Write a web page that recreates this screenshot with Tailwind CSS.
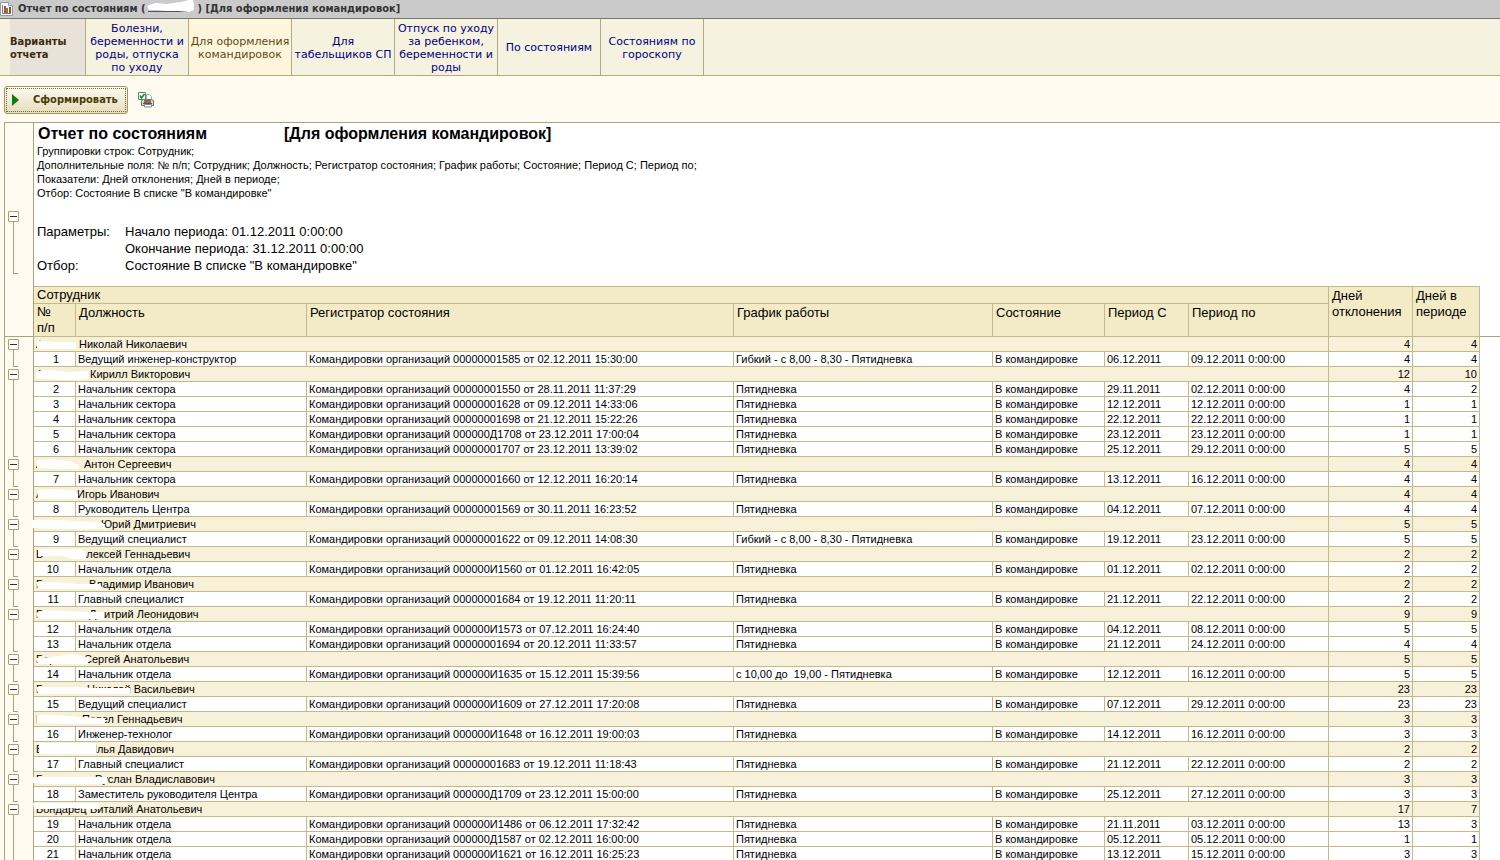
<!DOCTYPE html>
<html lang="ru">
<head>
<meta charset="utf-8">
<title>Отчет по состояниям</title>
<script src="https://cdn.jsdelivr.net/npm/@tailwindcss/browser@4"></script>
</head>
<body class="flex h-screen flex-col overflow-hidden bg-[#fffbf0] font-['Liberation_Sans',Arial,sans-serif] text-black">

<header class="flex h-[19px] shrink-0 items-center gap-[5px] border-b border-[#77766f] bg-[#cacaca] font-['DejaVu_Sans_Condensed','DejaVu_Sans',sans-serif] text-[11px] font-bold text-[#333]">
  <svg class="h-[14px] w-[13px] shrink-0" viewBox="0 0 13 14" aria-hidden="true">
    <path d="M.5.5h8l4 3v10H.5z" fill="#fff" stroke="#8a9cae"/>
    <path d="M8.5.5v3h4" fill="#dde4ee" stroke="#8a9cae"/>
    <path d="M2.500 3v8.500h8.500" fill="none" stroke="#8b7a70"/>
    <path d="M4 4h2v7H4z" fill="#c8452f"/><path d="M6 6h2v5H6z" fill="#4a9a45"/><path d="M9 5h2v6H9z" fill="#b8402f"/>
  </svg>
  <h1 class="flex whitespace-pre">Отчет по состояниям (<svg class="h-[14px] w-[52px] shrink-0 overflow-visible" viewBox="0 0 52 14" aria-hidden="true"><path d="M2 10h40v1H2z" fill="#555"/><path d="M1 5l8-3 12 1 14-2 8-2h4l1 4v6l-5 2-10-1-12 0-10-1-8 0z" fill="#fff"/></svg>) [Для оформления командировок]</h1>
</header>

<nav class="flex h-[57px] shrink-0 border-b border-[#b5aa82] bg-[#f5f2e0] pl-[10px] font-['DejaVu_Sans',Verdana,sans-serif] text-[11px] leading-[13px] text-[#000080]" aria-label="Варианты отчета">
  <div class="flex w-[76px] items-center border-r border-[#b5aa82] bg-[#e9e2d9] pt-[2px] font-['DejaVu_Sans_Condensed','DejaVu_Sans',sans-serif] font-bold text-[#3a2c10]">Варианты отчета</div>
  <button class="w-[103px] border-r border-[#b5aa82] pt-[2px]">Болезни,<br>беременности и<br>роды, отпуска<br>по уходу</button>
  <button class="w-[103px] border-r border-[#b5aa82] bg-[#fff6dd] pt-[2px] text-[#5f4a10]">Для оформления<br>командировок</button>
  <button class="w-[103px] border-r border-[#b5aa82] pt-[2px]">Для<br>табельщиков СП</button>
  <button class="w-[103px] border-r border-[#b5aa82] pt-[2px]">Отпуск по уходу<br>за ребенком,<br>беременности и<br>роды</button>
  <button class="w-[103px] border-r border-[#b5aa82]">По состояниям</button>
  <button class="w-[103px] border-r border-[#b5aa82] pt-[2px]">Состояниям по<br>гороскопу</button>
</nav>

<div class="flex h-[46px] shrink-0 items-center gap-[10px] pl-1 pt-[2px]">
  <button class="h-[28px] w-[124px] rounded-[3px] border border-[#a39566] bg-linear-to-b from-[#fdfaf0] to-[#e6ddb9] p-px font-['DejaVu_Sans_Condensed','DejaVu_Sans',sans-serif] text-[11px] font-bold text-[#4a3a08]">
    <span class="flex h-full items-center gap-[14px] border border-dotted border-[#6f6540] pl-[5px]">
      <svg class="h-[12px] w-[7px]" viewBox="0 0 7 12" aria-hidden="true"><path d="M0 0l7 6-7 6z" fill="#0a7d12"/></svg>
      Сформировать
    </span>
  </button>
  <button aria-label="Настройки печати">
    <svg class="h-[16px] w-[17px]" viewBox="0 0 17 16" aria-hidden="true">
      <path d="M8.500 2.500h3l2 2v5h-5z" fill="#fff" stroke="#9eabbb"/>
      <path d="M3.500 8.500l2-1h8l2 1v5h-12z" fill="#dcd8cd" stroke="#77746c"/>
      <path d="M6 8h7v3H6z" fill="#8f6b52"/><path d="M5 11h9v1H5z" fill="#555"/><path d="M6.500 12.500h7v2.500h-7z" fill="#fff" stroke="#888"/>
      <path d="M.5.5h7v7h-7z" fill="#fff" stroke="#5d8a66"/>
      <path d="M2 3.500l1.500 2.500L6.500 2" fill="none" stroke="#14851c" stroke-width="1.500"/>
    </svg>
  </button>
</div>

<main class="ml-1 grow border-t border-l border-[#aaa27c] bg-white">
  <section class="flex h-[163px]">
    <div class="w-[29px] shrink-0 border-r border-[#aaa27c] bg-[#fffbf0] pl-[3px] pt-[88px]">
      <button class="flex size-[11px] items-center justify-center rounded-[1px] border border-[#a8a17c] bg-[#fffdf5]" aria-label="Свернуть"><span class="h-px w-[7px] bg-[#333]"></span></button>
      <div class="ml-[5px] h-[52px] w-[5px] border-b border-l border-[#a8a17c]"></div>
    </div>
    <div class="pl-[3px] text-[11px] leading-[14px]">
      <h2 class="flex whitespace-pre pl-px pt-[2px] text-[16px] leading-[18px] font-bold"><span class="w-[246px]">Отчет по состояниям</span><span>[Для оформления командировок]</span></h2>
      <div class="h-px"></div>
      <p>Группировки строк: Сотрудник;</p>
      <p>Дополнительные поля: № п/п; Сотрудник; Должность; Регистратор состояния; График работы; Состояние; Период С; Период по;</p>
      <p>Показатели: Дней отклонения; Дней в периоде;</p>
      <p>Отбор: Состояние В списке "В командировке"</p>
      <dl class="grid grid-cols-[88px_auto] pt-[23px] text-[13px] leading-[17px]">
        <dt>Параметры:</dt><dd>Начало периода: 01.12.2011 0:00:00</dd>
        <dd class="col-start-2">Окончание периода: 31.12.2011 0:00:00</dd>
        <dt>Отбор:</dt><dd>Состояние В списке "В командировке"</dd>
      </dl>
    </div>
  </section>

  <table id="report" class="w-full table-fixed border-separate border-spacing-0 text-[11px] leading-[14px]">
    <colgroup>
      <col class="w-[29px]"><col class="w-[42px]"><col class="w-[231px]"><col class="w-[427px]"><col class="w-[259px]"><col class="w-[112px]"><col class="w-[84px]"><col class="w-[140px]"><col class="w-[84px]"><col class="w-[67px]"><col>
    </colgroup>
    <thead class="text-left align-top text-[13px] leading-[16px] [&_th]:border-[#c4b98a] [&_th]:pl-[3px] [&_th]:font-normal">
      <tr class="h-[18px]">
        <td rowspan="2" class="border-r border-b border-[#aaa27c] bg-[#fffbf0]"></td>
        <th colspan="7" class="border-t border-r border-b bg-[#f3ebc6]">Сотрудник</th>
        <th rowspan="2" class="border-t border-r border-b bg-[#f3ebc6] pt-px">Дней отклонения</th>
        <th rowspan="2" class="border-t border-r border-b bg-[#f3ebc6] pt-px">Дней в периоде</th>
        <td rowspan="2" class="border-b border-[#aaa27c]"></td>
      </tr>
      <tr class="h-[33px] bg-[#f3ebc6]">
        <th class="border-r border-b">№<br>п/п</th>
        <th class="border-r border-b pt-px">Должность</th>
        <th class="border-r border-b pt-px">Регистратор состояния</th>
        <th class="border-r border-b pt-px">График работы</th>
        <th class="border-r border-b pt-px">Состояние</th>
        <th class="border-r border-b pt-px">Период С</th>
        <th class="border-r border-b pt-px">Период по</th>
      </tr>
    </thead>
  </table>
</main>

<script>
// Each group: lead text, width of the lead, name, smudge outline, days off, days in period, rows.
// Each row: number, position, document, schedule, from, to, days off, days in period.
const five = 'Пятидневка', flex = 'Гибкий - с 8,00 - 8,30 - Пятидневка';
const groups = [
  ['А', 43, 'Николай Николаевич', 'M3 3l8 1 10 1h8l13 0v7H10l-7-1z', 4, 4, [
    [1, 'Ведущий инженер-конструктор', '00000001585 от 02.12.2011 15:30:00', flex, '06.12.2011', '09.12.2011', 4, 4]]],
  ['А', 54, 'Кирилл Викторович', 'M2 4l14-1 20 2 18-1v8l-20 1-18-1H2z', 12, 10, [
    [2, 'Начальник сектора', '00000001550 от 28.11.2011 11:37:29', five, '29.11.2011', '02.12.2011', 4, 2],
    [3, 'Начальник сектора', '00000001628 от 09.12.2011 14:33:06', five, '12.12.2011', '12.12.2011', 1, 1],
    [4, 'Начальник сектора', '00000001698 от 21.12.2011 15:22:26', five, '22.12.2011', '22.12.2011', 1, 1],
    [5, 'Начальник сектора', '000000Д1708 от 23.12.2011 17:00:04', five, '23.12.2011', '23.12.2011', 1, 1],
    [6, 'Начальник сектора', '00000001707 от 23.12.2011 13:39:02', five, '25.12.2011', '29.12.2011', 5, 5]]],
  ['А', 48, 'Антон Сергеевич', 'M3 3l14-1 18 2 10 4v4l-26 0-16-1z', 4, 4, [
    [7, 'Начальник сектора', '00000001660 от 12.12.2011 16:20:14', five, '13.12.2011', '16.12.2011', 4, 4]]],
  ['А', 41, 'Игорь Иванович', 'M3 3l20-1 19 2 2 3v5H4z', 4, 4, [
    [8, 'Руководитель Центра', '00000001569 от 30.11.2011 16:23:52', five, '04.12.2011', '07.12.2011', 4, 4]]],
  ['', 65, 'Юрий Дмитриевич', 'M-1 3h25l14 1 28 1 5 2v5H16l-17-1z', 5, 5, [
    [9, 'Ведущий специалист', '00000001622 от 09.12.2011 14:08:30', flex, '19.12.2011', '23.12.2011', 5, 5]]],
  ['Б', 43, 'Алексей Геннадьевич', 'M4 2h44l4 3v7H36l-6-3H4z', 2, 2, [
    [10, 'Начальник отдела', '000000И1560 от 01.12.2011 16:42:05', five, '01.12.2011', '02.12.2011', 2, 2]]],
  ['Б', 53, 'Владимир Иванович', 'M2 5h14l30 2 20 0 3 5H4z', 2, 2, [
    [11, 'Главный специалист', '00000001684 от 19.12.2011 11:20:11', five, '21.12.2011', '22.12.2011', 2, 2]]],
  ['Б', 53, 'Дмитрий Леонидович', 'M2 6l10-3 40 2 18 0v7H4z', 9, 9, [
    [12, 'Начальник отдела', '000000И1573 от 07.12.2011 16:24:40', five, '04.12.2011', '08.12.2011', 5, 5],
    [13, 'Начальник отдела', '00000001694 от 20.12.2011 11:33:57', five, '21.12.2011', '24.12.2011', 4, 4]]],
  ['Бор', 48, 'Сергей Анатольевич', 'M2 6l16-1 20-3 10 2 6 1v7H4z', 5, 5, [
    [14, 'Начальник отдела', '000000И1635 от 15.12.2011 15:39:56', 'с 10,00 до  19,00 - Пятидневка', '12.12.2011', '16.12.2011', 5, 5]]],
  ['Б', 51, 'Николай Васильевич', 'M2 5h40l20 1h34v6H4z', 23, 23, [
    [15, 'Ведущий специалист', '000000И1609 от 27.12.2011 17:20:08', five, '07.12.2011', '29.12.2011', 23, 23]]],
  ['Б', 46, 'Павел Геннадьевич', 'M3 3l20 0 22 2 26 1v6H30L3 11z', 3, 3, [
    [16, 'Инженер-технолог', '000000И1648 от 16.12.2011 19:00:03', five, '14.12.2011', '16.12.2011', 3, 3]]],
  ['Б', 53, 'Илья Давидович', 'M5 1h57v11H36l-20 0H5z', 2, 2, [
    [17, 'Главный специалист', '00000001683 от 19.12.2011 11:18:43', five, '21.12.2011', '22.12.2011', 2, 2]]],
  ['Б', 59, 'Руслан Владиславович', 'M-1 5h62l12 0v7H8l-9-1z', 3, 3, [
    [18, 'Заместитель руководителя Центра', '000000Д1709 от 23.12.2011 15:00:00', five, '25.12.2011', '27.12.2011', 3, 3]]],
  ['Бондарец', 54, 'Виталий Анатольевич', 'M-1 1h66l1 6-10 0-20-1-20 1H0z', 17, 7, [
    [19, 'Начальник отдела', '000000И1486 от 06.12.2011 17:32:42', five, '21.11.2011', '03.12.2011', 13, 3],
    [20, 'Начальник отдела', '000000Д1587 от 02.12.2011 16:00:00', five, '05.12.2011', '05.12.2011', 1, 1],
    [21, 'Начальник отдела', '000000И1621 от 16.12.2011 16:25:23', five, '13.12.2011', '15.12.2011', 3, 3]]]
];
const cell = 'border-r border-b border-[#c4b98a] p-0 pl-[2px] whitespace-pre';
const num = 'border-r border-b border-[#c4b98a] p-0 pr-[2px] text-right';
document.getElementById('report').insertAdjacentHTML('beforeend', groups.map(([lead, w, name, blob, off, per, rows]) => `
  <tbody>
    <tr class="h-[15px]">
      <td rowspan="${rows.length + 1}" class="border-r border-[#aaa27c] bg-[#fffbf0] p-0 pl-[3px] pt-[2px] align-top">
        <button class="flex size-[11px] items-center justify-center rounded-[1px] border border-[#a8a17c] bg-[#fffdf5]" aria-label="Свернуть"><span class="h-px w-[7px] bg-[#333]"></span></button>
        <div class="ml-[5px] w-[5px] border-b border-l border-[#a8a17c]" style="height:${rows.length * 15 + 2}px"></div>
      </td>
      <td colspan="7" class="relative border-r border-b border-[#c4b98a] bg-[#f8f1d9] p-0 pl-[2px]">
        <div class="flex whitespace-pre"><span style="width:${w}px">${lead}</span><span>${name}</span></div>
        <svg class="absolute top-0 left-0 h-[14px] w-[110px] overflow-visible" aria-hidden="true"><path d="${blob}" fill="#fff"/></svg>
      </td>
      <td class="${num} bg-[#f8f1d9]">${off}</td><td class="${num} bg-[#f8f1d9]">${per}</td><td class="p-0"></td>
    </tr>` + rows.map(([n, post, doc, plan, from, to, a, b]) => `
    <tr class="h-[15px]">
      <td class="border-r border-b border-[#c4b98a] p-0 pr-4 text-right">${n}</td>
      <td class="${cell}">${post}</td>
      <td class="${cell}">Командировки организаций ${doc}</td>
      <td class="${cell}">${plan}</td>
      <td class="${cell}">В командировке</td>
      <td class="${cell}">${from}</td>
      <td class="${cell}">${to} 0:00:00</td>
      <td class="${num}">${a}</td><td class="${num}">${b}</td><td class="p-0"></td>
    </tr>`).join('') + '</tbody>').join(''));
</script>
</body>
</html>
